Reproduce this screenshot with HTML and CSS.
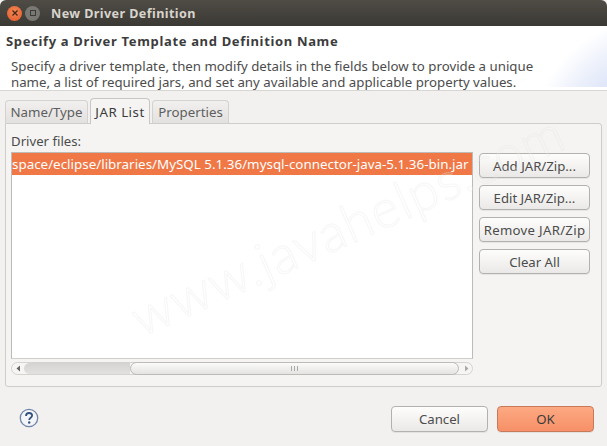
FILE: index.html
```html
<!DOCTYPE html>
<html lang="en">
<head>
<meta charset="utf-8">
<title>New Driver Definition</title>
<link rel="stylesheet" href="styles.css">
</head>
<body>
<div class="window">
  <header class="titlebar">
    <span class="wbtn close">
      <svg width="10" height="10" viewBox="0 0 10 10"><path d="M2.5 2.5l5 5M7.5 2.5l-5 5" stroke="#4a2a18" stroke-width="1.4" fill="none"/></svg>
    </span>
    <span class="wbtn max">
      <svg width="8" height="8" viewBox="0 0 8 8"><rect x="1.5" y="1.5" width="5" height="5" fill="none" stroke="#3c3a36" stroke-width="1"/></svg>
    </span>
    <span class="wtitle">New Driver Definition</span>
  </header>
  <section class="banner">
    <h1 class="banner-title">Specify a Driver Template and Definition Name</h1>
    <p class="banner-text">Specify a driver template, then modify details in the fields below to provide a unique<br>name, a list of required jars, and set any available and applicable property values.</p>
  </section>
  <main class="content">
    <nav class="tabs">
      <span class="tab first">Name/Type</span>
      <span class="tab active">JAR List</span>
      <span class="tab last">Properties</span>
    </nav>
    <div class="pane">
      <div class="label">Driver files:</div>
      <div class="pane-row">
        <div class="list-col">
          <div class="list">
            <div class="row-selected">space/eclipse/libraries/MySQL 5.1.36/mysql-connector-java-5.1.36-bin.jar</div>
          </div>
          <div class="scrollbar">
            <span class="arrow left"><svg width="5" height="7" viewBox="0 0 5 7"><path d="M4 0.5v6L0.5 3.5z" fill="#666"/></svg></span>
            <span class="trough"></span>
            <span class="thumb"><span class="grip"></span></span>
            <span class="arrow right"><svg width="5" height="7" viewBox="0 0 5 7"><path d="M1 0.5v6l3.500-3z" fill="#aaa"/></svg></span>
          </div>
        </div>
        <div class="side">
          <button class="btn">Add JAR/Zip...</button>
          <button class="btn">Edit JAR/Zip...</button>
          <button class="btn wide">Remove JAR/Zip</button>
          <button class="btn">Clear All</button>
        </div>
      </div>
    </div>
    <footer class="footer">
      <svg class="help" width="20" height="20" viewBox="0 0 20 20">
        <circle cx="10" cy="10" r="8.700" fill="#f4f5f8" stroke="#7085a8" stroke-width="1.300"/>
        <path d="M7 8c0-2 1.400-3 3.100-3s3 1 3 2.600c0 2.200-2.900 2.200-2.900 4.400" fill="none" stroke="#34507f" stroke-width="1.800"/>
        <circle cx="10.200" cy="14.500" r="1.200" fill="#34507f"/>
      </svg>
      <div class="actions">
        <button class="btn big">Cancel</button>
        <button class="btn big ok">OK</button>
      </div>
    </footer>
  </main>
  <div class="watermark">www.javahelps.com</div>
</div>
</body>
</html>
```
FILE: styles.css
```css
* { box-sizing: border-box; }
html, body { margin: 0; padding: 0; }
body { width: 607px; height: 446px; overflow: hidden; background: #f2f1f0; font-family: "Noto Sans", "Open Sans", sans-serif; color: #3c3c3c; }
.window { position: relative; width: 607px; height: 446px; overflow: hidden; background: #f2f1f0; }
.titlebar { height: 26px; display: flex; align-items: center; padding-left: 7px; background: linear-gradient(#4f4c46, #3b3934); border-radius: 6px 6px 0 0; }
.wbtn { width: 15px; height: 15px; border-radius: 50%; display: flex; align-items: center; justify-content: center; }
.close { background: radial-gradient(circle at 50% 40%, #f58a55, #e2562a); }
.max { margin-left: 3px; background: #7a7872; }
.wtitle { margin-left: 11px; font-size: 12.600px; font-weight: 700; color: #d8d4cc; letter-spacing: .4px; }
.banner { height: 64px; padding: 7px 6px 0; background: radial-gradient(circle 130px at 660px 120px, #dce4f8 58%, #edf1fb 80%, #fff 100%) 0 0 / 100% 61px no-repeat, #fff; }
.banner-title { margin: 0; font-size: 13px; line-height: 17px; font-weight: 700; color: #3c3c3c; letter-spacing: .66px; white-space: nowrap; }
.banner-text { margin: 8px 0 0; padding-left: 5px; font-size: 13.250px; line-height: 16px; color: #4c4c4c; white-space: nowrap; }
.content { height: 356px; border-top: 1px solid #d8d6d3; padding: 7px 5px 0; }
.tabs { display: flex; height: 25px; align-items: flex-end; }
.tab { height: 23px; margin-right: 2px; display: flex; align-items: center; justify-content: center; font-size: 13.300px; color: #5e5e5e; border: 1px solid #d4d2cf; border-bottom: 0; border-radius: 4px 4px 0 0; background: linear-gradient(#f1f0ef, #e3e1df); white-space: nowrap; }
.tab.first { width: 83px; }
.tab.last { width: 77px; }
.tab.active { position: relative; width: 60px; height: 26px; color: #3c3c3c; background: #f5f4f3; border-color: #c9c7c4; z-index: 1; margin-bottom: -1px; letter-spacing: .5px; }
.pane { height: 264px; background: #f5f4f3; border: 1px solid #cfcdca; border-radius: 0 3px 3px 3px; padding: 9px 5px 0; }
.label { font-size: 13.200px; line-height: 16px; color: #4c4c4c; }
.pane-row { display: flex; margin-top: 3px; }
.list-col { width: 462px; }
.list { height: 207px; background: #fff; border: 1px solid #bdbbb8; border-bottom-color: #d0cecb; overflow: hidden; }
.row-selected { height: 22px; background: #f07746; color: #fff; font-size: 13.400px; line-height: 22px; white-space: nowrap; overflow: hidden; }
.scrollbar { position: relative; display: flex; align-items: center; height: 13px; margin-top: 3px; border: 1px solid #d5d3d0; border-radius: 7px; background: #f6f5f4; }
.arrow { width: 12px; flex: none; display: flex; justify-content: center; }
.trough { width: 106px; height: 11px; background: linear-gradient(#d4d3d1, #e2e1df); border-radius: 6px 0 0 6px; }
.thumb { flex: 1; height: 13px; margin-right: 1px; border: 1px solid #bdbbb8; border-radius: 7px; background: linear-gradient(#fbfbfa, #e4e3e1); position: relative; }
.grip { position: absolute; right: 160px; top: 3px; width: 7px; height: 5px; background: repeating-linear-gradient(90deg, #aaa 0 1px, transparent 1px 3px); }
.side { display: flex; flex-direction: column; gap: 7px; margin-left: 6px; padding-top: 1px; }
.btn { width: 111px; height: 25px; padding: 0; font-family: inherit; font-size: 13.200px; color: #4c4c4c; border: 1px solid #b3b1ae; border-radius: 4px; background: linear-gradient(#fdfdfc, #ebe9e7); box-shadow: 0 1px 0 rgba(0,0,0,.06); white-space: nowrap; }
.btn.wide { letter-spacing: .3px; }
.footer { display: flex; align-items: center; justify-content: space-between; padding: 19px 8px 0 14px; }
.help { display: block; margin-bottom: 3px; }
.actions { display: flex; gap: 9px; }
.btn.big { width: 97px; height: 26px; }
.btn.ok { background: linear-gradient(#fda982, #f69068); border-color: #c8795a; color: #3c3c3c; }
.watermark { position: absolute; left: 113px; top: 197px; font-size: 53px; letter-spacing: 1px; line-height: 1; white-space: nowrap; color: rgba(255,255,255,.1); -webkit-text-stroke: 1px rgba(225,225,225,.3); transform: rotate(-24deg); pointer-events: none; font-weight: 300; font-family: "Lato", sans-serif; }
```
